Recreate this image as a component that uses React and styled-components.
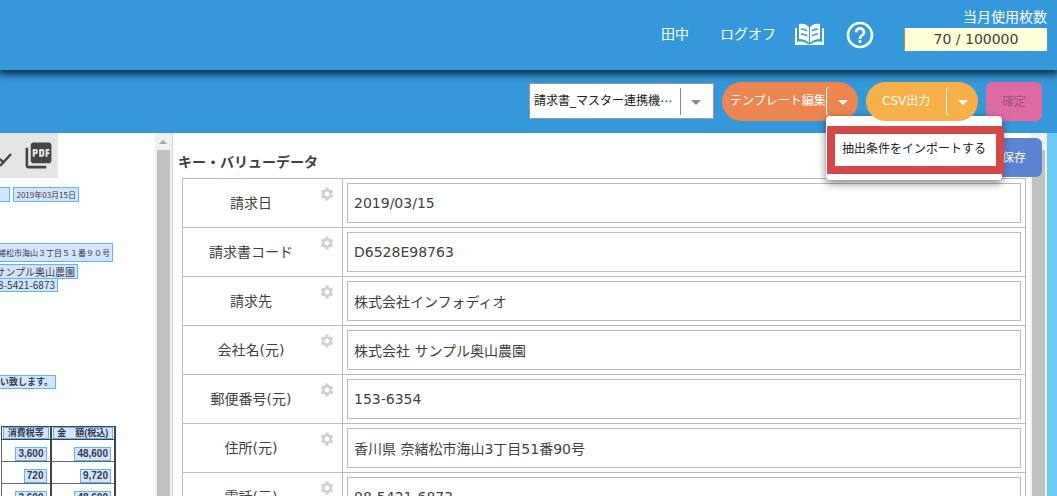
import React from 'react'
import styled, { createGlobalStyle } from 'styled-components'
import { MdSettings, MdPictureAsPdf, MdHelpOutline, MdArrowDropDown } from 'react-icons/md'

const fields = [
    { id: 'date', label: "請求日", value: "2019/03/15" },
    { id: 'code', label: "請求書コード", value: "D6528E98763" },
    { id: 'billTo', label: "請求先", value: "株式会社インフォディオ" },
    { id: 'company', label: "会社名(元)", value: "株式会社 サンプル奥山農園" },
    { id: 'zip', label: "郵便番号(元)", value: "153-6354" },
    { id: 'address', label: "住所(元)", value: "香川県 奈緒松市海山3丁目51番90号" },
    { id: 'tel', label: "電話(元)", value: "08-5421-6873" }
]

// text found on the scanned page, right is the distance from the left edge of the page
const words = [
    { text: "", right: 10, top: 54, height: 15, size: 8 },
    { text: "2019年03月15日", right: 79, top: 54, height: 15, size: 8 },
    { text: "緒松市海山３丁目５１番９０号", right: 113, top: 110, height: 19, size: 8 },
    { text: "サンプル奥山農園", right: 78, top: 131, height: 15, size: 10 },
    { text: "08-5421-6873", right: 58, top: 145, height: 14, size: 10 },
    { text: "願い致します。", right: 56, top: 242, height: 14, size: 9, bold: true }
]

const items = [
    { tax: "3,600", total: "48,600" },
    { tax: "720", total: "9,720" },
    { tax: "3,600", total: "48,600" }
]

function BookIcon() {
    return (
        <svg width="32" height="26" viewBox="0 0 32 26" aria-hidden="true">
            <path fill="#fff" d="M5 2c4-1 7 0 10 3v16c-3-3-6-4-10-4zM26 2c-4-1-7 0-10 3v16c3-3 6-4 10-4z" />
            <path fill="#fff" d="M1 6h2v14c5-1 8 0 11 2h3c3-2 6-3 11-2V6h2v17H1z" />
            <path fill="none" stroke="#3598db" strokeWidth="1.6" d="M7 7c2 0 4 0 6 2M7 12c2 0 4 0 6 2M24 7c-2 0-4 0-6 2M24 12c-2 0-4 0-6 2" />
        </svg>
    )
}

function ScrollBar() {
    return (
        <Track>
            <svg width="16" height="17" viewBox="0 0 16 17" aria-hidden="true">
                <path fill="#a3a3a3" d="M8 7l4 4H4z" />
            </svg>
            <Thumb />
        </Track>
    )
}

function App() {
    return (
        <Page>
            <GlobalStyle />
            <Header>
                <HeaderLink href="#user">田中</HeaderLink>
                <HeaderLink href="#logoff">ログオフ</HeaderLink>
                <IconLink href="#manual" aria-label="マニュアル"><BookIcon /></IconLink>
                <IconLink href="#help" aria-label="ヘルプ"><MdHelpOutline size={32} /></IconLink>
                <Usage>
                    <span>当月使用枚数</span>
                    <UsageCount>70 / 100000</UsageCount>
                </Usage>
            </Header>
            <Toolbar>
                <SelectBox>
                    <select aria-label="テンプレート">
                        <option>請求書_マスター連携機⋯</option>
                    </select>
                    <SelectArrow><MdArrowDropDown size={24} /></SelectArrow>
                </SelectBox>
                <SplitButton $color="#ec8650">
                    <MainButton $width="104px" $indent="8px">テンプレート編集</MainButton>
                    <CaretButton aria-label="テンプレート編集メニュー" aria-expanded="true"><MdArrowDropDown size={24} /></CaretButton>
                    <Menu>
                        <MenuItem>抽出条件をインポートする</MenuItem>
                    </Menu>
                </SplitButton>
                <SplitButton $color="#f7af49">
                    <MainButton $width="80px" $indent="16px">CSV出力</MainButton>
                    <CaretButton aria-label="CSV出力メニュー"><MdArrowDropDown size={24} /></CaretButton>
                </SplitButton>
                <ActionButton $color="#df6ba3" $text="#a3507c">確定</ActionButton>
            </Toolbar>
            <Content>
                <ScanPanel>
                    <Scan>
                        <ScanTools>
                            <ToolButton aria-label="線">
                                <svg width="16" height="30" viewBox="0 0 16 30" aria-hidden="true">
                                    <path fill="none" stroke="#444" strokeWidth="2.4" d="M0 25L11 13M0 18l3 3" />
                                </svg>
                            </ToolButton>
                            <ToolButton aria-label="PDF"><MdPictureAsPdf size={31} /></ToolButton>
                        </ScanTools>
                        {
                            words.map((word) => (
                                <Word key={word.top + word.text} $word={word}>{word.text}</Word>
                            ))
                        }
                        <ScanTable>
                            <thead>
                                <tr>
                                    <th><Mark>消費税等</Mark></th>
                                    <th><Mark>金　額(税込)</Mark></th>
                                </tr>
                            </thead>
                            <tbody>
                                {
                                    items.map((item, i) => (
                                        <tr key={i}>
                                            <td><Mark>{item.tax}</Mark></td>
                                            <td><Mark>{item.total}</Mark></td>
                                        </tr>
                                    ))
                                }
                            </tbody>
                        </ScanTable>
                    </Scan>
                    <ScrollBar />
                </ScanPanel>
                <DataPanel>
                    <DataArea>
                        <h2>キー・バリューデータ</h2>
                        <DataTable>
                            <tbody>
                                {
                                    fields.map(({ id, label, value }) => (
                                        <tr key={id}>
                                            <th scope="row">
                                                <FieldName>
                                                    <label htmlFor={id}>{label}</label>
                                                    <GearButton aria-label={label + "の設定"}><MdSettings size={16} /></GearButton>
                                                </FieldName>
                                            </th>
                                            <td><FieldInput id={id} defaultValue={value} /></td>
                                        </tr>
                                    ))
                                }
                            </tbody>
                        </DataTable>
                    </DataArea>
                    <ScrollBar />
                    <SaveButton $color="#5d84d1" $text="#fff">保存</SaveButton>
                </DataPanel>
            </Content>
        </Page>
    )
}

export default App

const GlobalStyle = createGlobalStyle`
    *{
        box-sizing:border-box;
    }
    body{
        margin:0;
        color:#404040;
        font-family:"DejaVu Sans", "Noto Sans CJK JP", sans-serif;
        font-size:14px;
    }
    button, input, select{
        font-family:inherit;
        color:inherit;
        margin:0;
    }
    button{
        padding:0;
        border:none;
        background:none;
        cursor:pointer;
    }
    svg{
        display:block;
        flex-shrink:0;
    }
`

const Page = styled.div`
    height:100vh;
    display:flex;
    flex-direction:column;
    overflow:hidden;
    background:#6ac8f3;
`

const Header = styled.header`
    position:relative;
    height:70px;
    flex-shrink:0;
    display:flex;
    align-items:center;
    padding-right:10px;
    justify-content:flex-end;
    background:#3598db;
    color:#fff;
    box-shadow:0 2px 8px 2px rgba(0, 0, 0, 0.75);
    z-index:1;
`

const HeaderLink = styled.a`
    color:#fff;
    text-decoration:none;
    margin-right:31px;
    padding-bottom:4px;
    & + &{
        margin-right:18px;
    }
`

const IconLink = styled.a`
    color:#fff;
    margin-right:18px;
    & + &{
        margin-right:28px;
    }
`

const Usage = styled.div`
    align-self:flex-start;
    display:flex;
    flex-direction:column;
    align-items:flex-end;
    padding-top:6px;
    line-height:22px;
`

const UsageCount = styled.span`
    width:143px;
    height:23px;
    text-align:center;
    color:#404040;
    background:#ffffd8;
    border-left:1px solid #f08030;
`

const Toolbar = styled.div`
    height:63px;
    flex-shrink:0;
    display:flex;
    justify-content:flex-end;
    align-items:flex-start;
    gap:8px;
    padding:12px 15px 0 0;
    background:#3598db;
`

const SelectBox = styled.div`
    position:relative;
    width:185px;
    height:36px;
    margin-top:1px;
    select{
        appearance:none;
        width:100%;
        height:100%;
        padding:0 34px 0 4px;
        border:1px solid #999;
        border-radius:0;
        background:#fff;
        color:#222;
        font-size:12px;
    }
`

const SelectArrow = styled.span`
    position:absolute;
    right:6px;
    top:5px;
    height:27px;
    padding-left:3px;
    display:flex;
    align-items:center;
    color:#888;
    border-left:1px solid #888;
    pointer-events:none;
`

const SplitButton = styled.div`
    position:relative;
    height:39px;
    display:flex;
    align-items:center;
    border-radius:20px;
    background:${(props) => props.$color};
    color:#fff;
    z-index:2;
`

const MainButton = styled.button`
    width:${(props) => props.$width};
    height:39px;
    padding:0 0 4px ${(props) => props.$indent};
    text-align:left;
    white-space:nowrap;
    font-size:12px;
`

const CaretButton = styled.button`
    width:32px;
    height:29px;
    display:flex;
    align-items:center;
    justify-content:center;
    border-left:1px solid #fff;
    border-radius:4px;
`

const Menu = styled.div`
    position:absolute;
    top:34px;
    left:104px;
    width:176px;
    padding:10px 0 6px;
    background:#fff;
    border-radius:4px;
    box-shadow:0 3px 8px rgba(0, 0, 0, 0.5);
`

const MenuItem = styled.button`
    display:block;
    width:177px;
    height:48px;
    margin-left:1px;
    padding:0 3px 6px 0;
    white-space:nowrap;
    border:8px solid #d3484b;
    color:#222;
    font-size:12px;
`

const ActionButton = styled.button`
    width:56px;
    height:39px;
    padding-bottom:3px;
    border-radius:6px;
    background:${(props) => props.$color};
    color:${(props) => props.$text};
    font-size:12px;
`

const SaveButton = styled(ActionButton)`
    position:absolute;
    top:5px;
    right:5px;
`

const Content = styled.main`
    flex:1;
    min-height:0;
    display:flex;
    margin-right:10px;
    background:#fff;
`

const Track = styled.div`
    width:17px;
    flex-shrink:0;
    display:flex;
    flex-direction:column;
    background:#f1f1f1;
`

const Thumb = styled.div`
    flex:1;
    margin:0 2px;
    background:#c1c1c1;
`

const ScanPanel = styled.section`
    width:173px;
    flex-shrink:0;
    display:flex;
    border-right:1px solid #d4d4d4;
`

const Scan = styled.div`
    position:relative;
    flex:1;
    overflow:hidden;
    color:#333a50;
`

const ScanTools = styled.div`
    width:58px;
    height:45px;
    display:flex;
    align-items:center;
    gap:7px;
    background:#e5e5e5;
`

const ToolButton = styled.button`
    color:#444;
`

const Word = styled.span`
    position:absolute;
    top:${(props) => props.$word.top}px;
    right:calc(100% - ${(props) => props.$word.right}px);
    height:${(props) => props.$word.height}px;
    min-width:12px;
    padding:0 2px;
    display:flex;
    align-items:center;
    white-space:nowrap;
    font-family:"Noto Sans CJK JP", sans-serif;
    font-size:${(props) => props.$word.size}px;
    line-height:12px;
    font-weight:${(props) => props.$word.bold ? 700 : 400};
    background:#d6e4fb;
    border:1px solid #5ab8f0;
`

const ScanTable = styled.table`
    position:absolute;
    top:293px;
    left:1px;
    border-collapse:collapse;
    table-layout:fixed;
    width:115px;
    font-family:"Liberation Sans", "Noto Sans CJK JP", sans-serif;
    font-size:10px;
    font-weight:700;
    th, td{
        padding:0;
        height:22px;
        border:1px solid #666;
        border-right:2px solid #444;
        text-align:right;
        vertical-align:bottom;
    }
    th{
        height:12px;
        border:1px solid #444;
        border-right-width:2px;
        text-align:center;
    }
    th:first-child{
        width:49px;
    }
    td{
        padding:0 3px 0 0;
    }
`

const Mark = styled.span`
    display:inline-block;
    height:14px;
    line-height:12px;
    padding:0 2px;
    white-space:nowrap;
    vertical-align:top;
    background:#d6e4fb;
    border:1px solid #5ab8f0;
    th &{
        display:block;
        height:12px;
        line-height:10px;
        margin:0 1px;
        padding:0;
        font-size:9px;
    }
`

const DataPanel = styled.section`
    position:relative;
    flex:1;
    min-width:0;
    display:flex;
`

const DataArea = styled.div`
    flex:1;
    min-width:0;
    overflow:hidden;
    padding:19px 4px 0 5px;
    h2{
        margin:0 0 6px;
        font-size:14px;
        line-height:20px;
    }
`

const DataTable = styled.table`
    width:calc(100% - 4px);
    margin-left:4px;
    border-collapse:collapse;
    th, td{
        height:49px;
        padding:0;
        border:1px solid #bbb;
        font-weight:400;
    }
    th{
        width:160px;
    }
    td{
        padding:0 4px;
    }
`

const FieldName = styled.div`
    height:48px;
    display:flex;
    align-items:center;
    padding-right:7px;
    label{
        flex:1;
        padding-bottom:2px;
        text-align:center;
    }
`

const GearButton = styled.button`
    align-self:flex-start;
    margin-top:7px;
    color:#d0d0d0;
`

const FieldInput = styled.input`
    display:block;
    width:100%;
    height:40px;
    padding:0 6px;
    border:1px solid #bbb;
    background:#fff;
    font-size:14px;
`
